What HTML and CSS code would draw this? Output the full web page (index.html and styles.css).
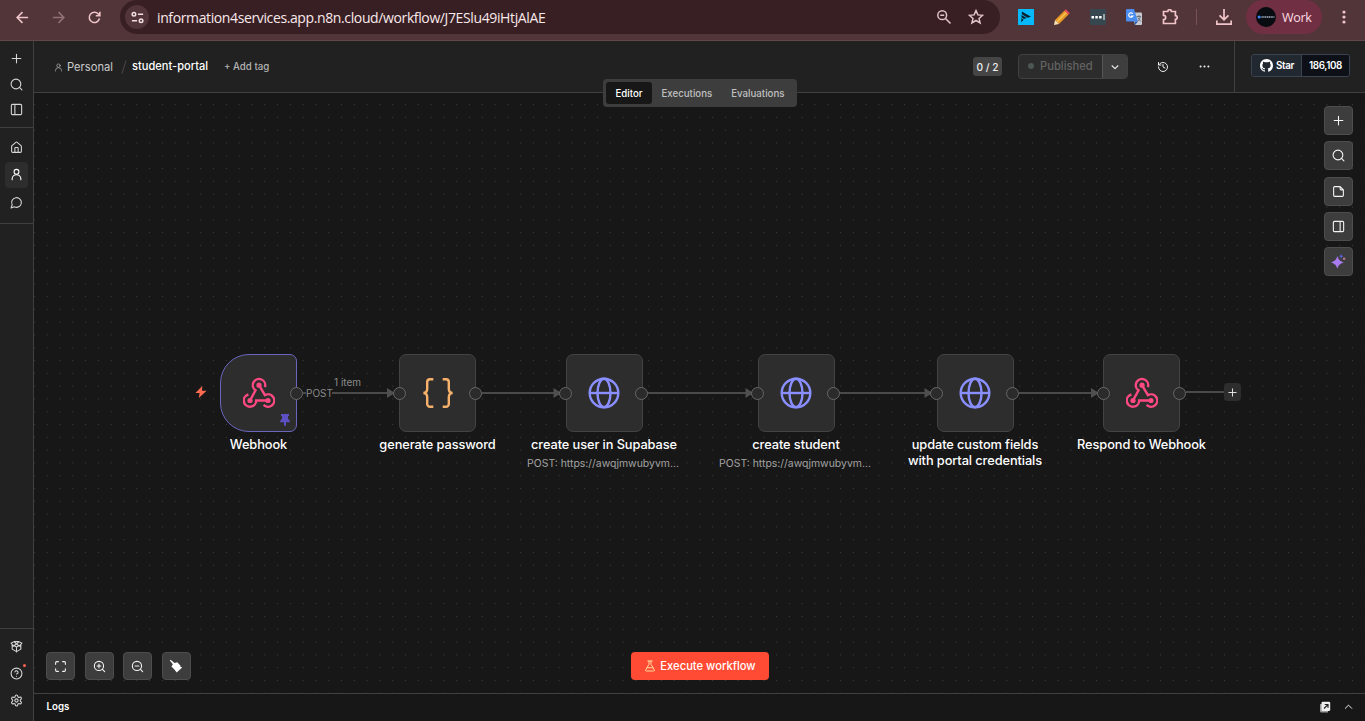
FILE: index.html
```html
<!DOCTYPE html>
<html lang="en">
<head>
<meta charset="utf-8">
<title>student-portal - n8n</title>
<link rel="stylesheet" href="styles.css">
</head>
<body>
<svg class="defs" aria-hidden="true">
  <symbol id="plus" viewBox="0 0 24 24"><path d="M4 12h16M12 4v16"/></symbol>
  <symbol id="search" viewBox="0 0 24 24"><circle cx="11" cy="11" r="9"/><path d="m22 22-4.500-4.500"/></symbol>
  <symbol id="panel-left" viewBox="0 0 24 24"><rect x="2.500" y="2.500" width="19" height="19" rx="2"/><path d="M9 3v18"/></symbol>
  <symbol id="panel-right" viewBox="0 0 24 24"><rect x="2.500" y="2.500" width="19" height="19" rx="2"/><path d="M15 3v18"/></symbol>
  <symbol id="home" viewBox="0 0 24 24"><path d="M15 21v-8a1 1 0 0 0-1-1h-4a1 1 0 0 0-1 1v8"/><path d="M3 10a2 2 0 0 1 .7-1.500l7-6a2 2 0 0 1 2.600 0l7 6A2 2 0 0 1 21 10v9a2 2 0 0 1-2 2H5a2 2 0 0 1-2-2z"/></symbol>
  <symbol id="user" viewBox="0 0 24 24"><circle cx="12" cy="7" r="4.500"/><path d="M4 21.500v-1.500a8 7.500 0 0 1 16 0v1.500"/></symbol>
  <symbol id="chat" viewBox="0 0 24 24"><path d="M7.900 20A9 9 0 1 0 4 16.100L2 22Z"/></symbol>
  <symbol id="box" viewBox="0 0 24 24"><path d="M12 22v-9M12 13l-8-4.500M12 13l8-4.500M4 8.500v8.300l8 4.700 8-4.700V8.500M12 7.500l4.500-4.500 5.500 3-4 4.200M12 7.500L7.500 3 2 6l4 4.200M7.500 3h9M12 7.500l-6 4M12 7.500l6 4"/></symbol>
  <symbol id="help" viewBox="0 0 24 24"><circle cx="12" cy="12" r="10"/><path d="M9.100 9a3 3 0 0 1 5.800 1c0 2-3 3-3 3M12 17h.01"/></symbol>
  <symbol id="gear" viewBox="0 0 24 24"><path d="M9.700 4.100a2.300 2.300 0 0 1 4.600 0 2.300 2.300 0 0 0 3.300 1.900 2.300 2.300 0 0 1 2.300 4 2.300 2.300 0 0 0 0 3.900 2.300 2.300 0 0 1-2.300 4 2.300 2.300 0 0 0-3.300 1.900 2.300 2.300 0 0 1-4.600 0 2.300 2.300 0 0 0-3.300-1.900 2.300 2.300 0 0 1-2.300-4 2.300 2.300 0 0 0 0-3.900 2.300 2.300 0 0 1 2.300-4 2.300 2.300 0 0 0 3.300-1.900"/><circle cx="12" cy="12" r="3"/></symbol>
  <symbol id="chev-down" viewBox="0 0 24 24"><path d="m5 9 7 7 7-7"/></symbol>
  <symbol id="chev-up" viewBox="0 0 24 24"><path d="m5 16 7-7 7 7"/></symbol>
  <symbol id="history" viewBox="0 0 24 24"><path d="M3 12a9 9 0 1 0 9-9 9.800 9.800 0 0 0-6.700 2.700L3 8M3 3v5h5M12 7v5l4 2"/></symbol>
  <symbol id="dots" viewBox="0 0 24 24"><path d="M3.500 12h.01M12 12h.01M20.500 12h.01"/></symbol>
  <symbol id="note" viewBox="0 0 24 24"><path d="M15 3H5a2 2 0 0 0-2 2v14a2 2 0 0 0 2 2h14a2 2 0 0 0 2-2V9ZM15 3v4a2 2 0 0 0 2 2h4"/></symbol>
  <symbol id="fit" viewBox="0 0 24 24"><path d="M8 3H5a2 2 0 0 0-2 2v3M21 8V5a2 2 0 0 0-2-2h-3M3 16v3a2 2 0 0 0 2 2h3M16 21h3a2 2 0 0 0 2-2v-3"/></symbol>
  <symbol id="zoom-in" viewBox="0 0 24 24"><circle cx="11" cy="11" r="8.500"/><path d="m21.500 21.500-4.500-4.500M11 7.500v7M7.500 11h7"/></symbol>
  <symbol id="zoom-out" viewBox="0 0 24 24"><circle cx="11" cy="11" r="8.500"/><path d="m21.500 21.500-4.500-4.500M7.500 11h7"/></symbol>
  <symbol id="flask" viewBox="0 0 24 24"><path d="M14 2v6.500l6.500 11A1.700 1.700 0 0 1 19 22H5a1.700 1.700 0 0 1-1.500-2.500L10 8.500V2M7.500 2h9M6.500 15.500h11"/></symbol>
  <symbol id="globe" viewBox="0 0 32 32"><circle cx="16" cy="16" r="14.300"/><ellipse cx="16" cy="16" rx="6.500" ry="14.300"/><path d="M1.700 16h28.600"/></symbol>
  <symbol id="webhook" viewBox="0 0 32 32"><path d="M7 23.500 12.500 13.300A6.200 6.200 0 1 1 21.900 10.100M25 23.500H13.200A6.200 6.200 0 1 1 5.400 17.500M16 8.200 21.900 18.200A6.200 6.200 0 1 1 20.600 27.900"/><g fill="currentColor" stroke="none"><circle cx="16" cy="8.200" r="2.600"/><circle cx="7" cy="23.500" r="2.600"/><circle cx="25" cy="23.500" r="2.600"/></g></symbol>
</svg>

<div class="browser">
  <div class="slot"><svg class="nav-icon" viewBox="0 0 16 16"><path d="M14 8H2.500M8 2.300 2.300 8 8 13.700"/></svg></div>
  <div class="slot dim"><svg class="nav-icon" viewBox="0 0 16 16"><path d="M2 8h11.500M8 2.300 13.700 8 8 13.700"/></svg></div>
  <div class="slot"><svg class="nav-icon" viewBox="0 0 16 16"><path d="M13.300 9A5.500 5.500 0 1 1 12 4.200L13.500 5.700M13.700 1.800v4.300H9.400"/></svg></div>
  <div class="address">
    <span class="site"><svg viewBox="0 0 16 16"><circle cx="4.200" cy="4.500" r="1.900"/><path d="M8.500 4.500h5.500M2 11.500h5.500"/><circle cx="11.800" cy="11.500" r="1.900"/></svg></span>
    <span class="url">information4services.app.n8n.cloud/workflow/J7ESlu49iHtjAlAE</span>
    <svg class="addr-icon" viewBox="0 0 16 16"><circle cx="6.200" cy="6.200" r="4.400"/><path d="m9.500 9.500 5 5M4.200 6.200h4"/></svg>
    <svg class="addr-icon star" viewBox="0 0 16 16"><path d="m8 1.600 1.900 4.300 4.700.4-3.600 3.100 1.100 4.600L8 11.500 3.900 14 5 9.400 1.400 6.300l4.700-.4z"/></svg>
  </div>
  <div class="ext">
    <div class="slot"><svg class="ext-icon" viewBox="0 0 16 16"><path fill="#05b9fa" d="M0 0h16v16H0z"/><path fill="#09222d" d="M3.800 2.500 13 7.800 9.500 8.700 3.800 5.200zM3.500 6l5 3-2.500.9-2.500-1.500zM3.300 9.200l2.400 1.500-2.400 2.500z"/></svg></div>
    <div class="slot"><svg class="ext-icon" viewBox="0 0 16 16"><path fill="#e79622" d="m1 11 9.500-9.500 4 4L5 15z"/><path fill="#f5bd4f" d="m2.300 12.300 9.500-9.500 1.200 1.200-9.500 9.500z"/><path fill="#f44765" d="m10.500 1.500 1.300-1.200 3.900 3.900-1.200 1.300z"/><path fill="#f8dfb6" d="m1 11-1 5 5-1z"/></svg></div>
    <div class="slot"><svg class="ext-icon" viewBox="0 0 16 16"><path fill="#37474f" d="M0 0h16v16H0z"/><path fill="#fff" d="M1.500 7h2.500v2.500H1.500zM5.300 7h2.500v2.500H5.300zM9.100 7h2.500v2.500H9.100zM13.500 5h1v6h-1z"/></svg></div>
    <div class="slot"><svg class="ext-icon" viewBox="0 0 16 16"><path fill="#c9cbd0" d="M6 3.500h9a1 1 0 0 1 1 1V15a1 1 0 0 1-1 1H9z"/><path fill="#4a8cf0" d="M1 0h7l4 12.500H1a1 1 0 0 1-1-1V1a1 1 0 0 1 1-1z"/><path fill="#2861b5" d="M8.800 12.500H12L9 16z"/><path fill="none" stroke="#fff" stroke-width="1.200" d="M6.800 4.800a2.200 2.200 0 1 0 .1 2.200H5"/><path fill="none" stroke="#68727d" d="M10.500 7.500H15M13 6v1.500M14.300 7.500c-.5 2.500-1.600 4-3 5M11.800 8.500l3 4"/></svg></div>
    <div class="slot"><svg class="ext-icon line" viewBox="0 0 16 16"><path d="M1.500 2.500h4.300a1.800 1.800 0 0 1 3.600 0h4v4.200a1.800 1.800 0 0 1 0 3.600v4.200H1.500v-3.800a2.200 2.200 0 0 0 0-4.400z"/></svg></div>
    <span class="ext-sep"></span>
    <div class="slot"><svg class="ext-icon line" viewBox="0 0 16 16"><path d="M8 0v10.500M3.500 6.300 8 10.700l4.500-4.400M.8 11.500v3.700h14.400v-3.700"/></svg></div>
    <div class="profile"><svg class="avatar" viewBox="0 0 20 20"><circle cx="10" cy="10" r="10" fill="#080b10"/><circle cx="3.200" cy="10" r="1.600" fill="#3e83f0"/><path stroke="#a8b4c4" stroke-width="1.300" stroke-dasharray="1.300 .5" d="M5.500 10h13"/></svg><span>Work</span></div>
    <div class="slot"><svg class="ext-icon kebab" viewBox="0 0 16 16"><circle cx="8" cy="3" r="1.600"/><circle cx="8" cy="8" r="1.600"/><circle cx="8" cy="13" r="1.600"/></svg></div>
  </div>
</div>

<div class="app">
  <nav class="sidebar">
    <div class="side-group top"><svg class="ic"><use href="#plus"/></svg><svg class="ic"><use href="#search"/></svg><svg class="ic"><use href="#panel-left"/></svg></div>
    <div class="side-group mid"><span class="side-item"><svg class="ic"><use href="#home"/></svg></span><span class="side-item active"><svg class="ic"><use href="#user"/></svg></span><span class="side-item"><svg class="ic"><use href="#chat"/></svg></span></div>
    <div class="side-group low"><svg class="ic"><use href="#box"/></svg><span class="help"><svg class="ic"><use href="#help"/></svg><i class="badge"></i></span><svg class="ic"><use href="#gear"/></svg></div>
  </nav>

  <main class="main">
    <header class="header">
      <svg class="ic crumb-icon"><use href="#user"/></svg>
      <span class="crumb">Personal</span>
      <svg class="slash" viewBox="0 0 6 14"><path d="M5 .5 1 13.500"/></svg>
      <span class="title">student-portal</span>
      <span class="tag">+ Add tag</span>
      <span class="count">0 / 2</span>
      <div class="publish"><span class="pub-label"><i></i>Published</span><span class="pub-menu"><svg class="ic"><use href="#chev-down"/></svg></span></div>
      <svg class="ic hist"><use href="#history"/></svg>
      <svg class="ic more"><use href="#dots"/></svg>
      <div class="github">
        <div class="gh">
          <span class="gh-star"><svg viewBox="0 0 16 16"><path d="M8 0c4.420 0 8 3.580 8 8a8.010 8.010 0 0 1-5.450 7.590c-.4.080-.55-.17-.55-.38 0-.27.010-1.130.010-2.200 0-.75-.25-1.230-.54-1.480 1.780-.2 3.650-.88 3.650-3.950 0-.88-.31-1.590-.82-2.150.080-.2.360-1.020-.080-2.120 0 0-.67-.22-2.200.82-.64-.18-1.320-.27-2-.27s-1.360.090-2 .27c-1.530-1.030-2.200-.82-2.200-.82-.44 1.100-.16 1.920-.080 2.120-.51.560-.82 1.280-.82 2.150 0 3.060 1.860 3.750 3.640 3.950-.23.200-.44.550-.51 1.070-.46.210-1.610.55-2.330-.66-.15-.24-.6-.83-1.230-.82-.67.010-.27.380.010.530.34.190.73.900.82 1.130.16.450.68 1.310 2.690.94 0 .67.010 1.300.010 1.490 0 .21-.15.450-.55.380A7.995 7.995 0 0 1 0 8c0-4.420 3.580-8 8-8"/></svg>Star</span>
          <span class="gh-num">186,108</span>
        </div>
      </div>
      <div class="tabs"><span class="tab on">Editor</span><span class="tab">Executions</span><span class="tab">Evaluations</span></div>
    </header>

    <section class="canvas">
      <svg class="edges" viewBox="0 0 1331 600">
        <g class="wires"><path d="M269 300h3M298 300h56M448 300h74M614 300h102M806 300h91M985 300h77M1152 299h38"/></g>
        <g class="arrows"><path d="m353 295 8 5-8 5zM519.500 295l8 5-8 5zM711.500 295l8 5-8 5zM890.500 295l8 5-8 5zM1057 295l8 5-8 5z"/></g>
      </svg>
      <svg class="bolt" viewBox="0 0 12 12"><path d="M7.300 0 .4 6.900h4.200L3.800 12l7.800-7.200H7z"/></svg>
      <span class="edge-label method">POST</span>
      <span class="edge-label items">1 item</span>

      <div class="node n1"><div class="card trigger"><svg class="art pink"><use href="#webhook"/></svg><i class="port out"></i>
        <svg class="pin" viewBox="0 0 10 12"><path d="M1 0h8v2H8v2.600L9.800 7v1.300H6v3.200L5 12l-1-.5V8.300H.2V7L2 4.600V2H1z"/></svg></div><div class="name">Webhook</div></div>
      <div class="node n2"><div class="card"><svg class="art orange" viewBox="0 0 32 32"><path d="M11.300 2.200H8a2.800 2.800 0 0 0-2.800 2.800v6.700c0 2.400-1.500 4.200-3.800 4.300 2.300.1 3.800 1.900 3.800 4.300V27A2.800 2.800 0 0 0 8 29.800h3.300M20.700 2.200H24a2.800 2.800 0 0 1 2.800 2.800v6.700c0 2.400 1.500 4.200 3.800 4.300-2.300.1-3.800 1.900-3.800 4.300V27a2.800 2.800 0 0 1-2.800 2.800h-3.300"/></svg><i class="port in"></i><i class="port out"></i></div><div class="name">generate password</div></div>
      <div class="node n3"><div class="card"><svg class="art blue"><use href="#globe"/></svg><i class="port in"></i><i class="port out"></i></div><div class="name">create user in Supabase</div><div class="sub">POST: https://awqjmwubyvm...</div></div>
      <div class="node n4"><div class="card"><svg class="art blue"><use href="#globe"/></svg><i class="port in"></i><i class="port out"></i></div><div class="name">create student</div><div class="sub">POST: https://awqjmwubyvm...</div></div>
      <div class="node n5"><div class="card"><svg class="art blue"><use href="#globe"/></svg><i class="port in"></i><i class="port out"></i></div><div class="name">update custom fields<br>with portal credentials</div></div>
      <div class="node n6"><div class="card"><svg class="art pink"><use href="#webhook"/></svg><i class="port in"></i><i class="port out"></i></div><div class="name">Respond to Webhook</div></div>
      <span class="add-node"><svg class="ic"><use href="#plus"/></svg></span>

      <div class="tools">
        <span class="btn"><svg class="ic"><use href="#plus"/></svg></span>
        <span class="btn"><svg class="ic"><use href="#search"/></svg></span>
        <span class="btn"><svg class="ic"><use href="#note"/></svg></span>
        <span class="btn"><svg class="ic"><use href="#panel-right"/></svg></span>
        <span class="btn"><svg class="sparkle" viewBox="0 0 16 16"><path fill="#a87cf0" d="M6.800 2.200C8 6.100 9.300 7.500 13.500 9c-4.200 1.500-5.500 2.900-6.700 6.800C5.600 11.900 4.300 10.500.2 9c4.100-1.500 5.400-2.900 6.600-6.800z"/><path fill="#5b60d6" d="M10.800 0c.5 1.500 1 2 2.500 2.500-1.500.5-2 1-2.500 2.500-.5-1.500-1-2-2.500-2.500C9.800 2 10.300 1.500 10.800 0z"/><circle cx="14" cy="5" r="1.300" fill="#b67b8b"/></svg></span>
      </div>
      <div class="controls">
        <span class="btn"><svg class="ic"><use href="#fit"/></svg></span>
        <span class="btn"><svg class="ic"><use href="#zoom-in"/></svg></span>
        <span class="btn"><svg class="ic"><use href="#zoom-out"/></svg></span>
        <span class="btn"><svg class="broom" viewBox="0 0 14 14"><path d="M1.600.8 5.500 4 8.300 3.200l3 3.200.2 1.400 1.700.7-5.500 4.900-2.500-3.100L2.400 7.600l1.500-2.400L.8 1.600z"/></svg></span>
      </div>
      <div class="execute"><svg class="ic"><use href="#flask"/></svg>Execute workflow</div>
    </section>

    <footer class="logs"><span>Logs</span>
      <svg class="popout" viewBox="0 0 12 12"><path fill="#9b9b9b" d="M1 3h8v8.500H2.500A1.500 1.500 0 0 1 1 10z"/><rect x="2.500" y=".8" width="8.700" height="9.200" rx="1.300" fill="#f0f0f0"/><path d="M5 7.500 8.700 3.800M5.700 3.500H9v3.300" stroke="#222" stroke-width="1.200" fill="none"/></svg>
      <svg class="ic"><use href="#chev-up"/></svg>
    </footer>
  </main>
</div>
</body>
</html>
```
FILE: styles.css
```css
* { box-sizing: border-box; }
body { margin: 0; width: 1365px; height: 721px; overflow: hidden; display: flex; flex-direction: column; background: #171717; color: #eee; font-family: Inter, "Liberation Sans", sans-serif; }
svg { display: block; flex: none; }
.defs { position: absolute; width: 0; height: 0; }
.ic { width: 13px; height: 13px; fill: none; stroke: currentColor; stroke-width: 2; stroke-linecap: round; stroke-linejoin: round; }

/* Browser toolbar */
.browser { flex: none; display: flex; height: 41px; padding: 0 3px 6px 4px; background: #513539; border-bottom: 1px solid #604649; font-family: "Open Sans", sans-serif; color: #f0c4c9; }
.slot { width: 36px; height: 34px; display: flex; align-items: center; justify-content: center; }
.dim { color: #927074; }
.nav-icon { width: 15px; height: 15px; fill: none; stroke: currentColor; stroke-width: 1.700; }
.address { display: flex; align-items: center; width: 880px; height: 34px; margin-left: 8px; padding: 0 16px 0 5px; border-radius: 17px; background: #381f24; color: #e0c4c7; }
.site { width: 24px; height: 24px; border-radius: 50%; background: #51353a; display: flex; align-items: center; justify-content: center; }
.site svg { width: 15px; height: 15px; fill: none; stroke: #f2dfe0; stroke-width: 1.600; }
.url { flex: 1; margin-left: 8px; font-size: 14px; letter-spacing: -.38px; color: #f8e9ea; white-space: nowrap; }
.addr-icon { width: 16px; height: 16px; fill: none; stroke: currentColor; stroke-width: 1.500; }
.star { margin-left: 16px; }
.ext { display: flex; align-items: center; margin-left: 8px; height: 34px; }
.ext-icon { width: 16px; height: 16px; }
.ext-icon.line { fill: none; stroke: currentColor; stroke-width: 1.700; }
.kebab { fill: currentColor; }
.ext-sep { width: 1px; height: 16px; margin: 0 9px 0 8px; background: #785257; }
.profile { display: flex; align-items: center; gap: 6px; width: 76px; height: 34px; margin: 0 4px; padding-left: 10px; border-radius: 17px; background: #712f43; color: #fadde3; font-size: 12.600px; letter-spacing: -.4px; }
.avatar { width: 20px; height: 20px; }

/* Sidebar */
.app { flex: 1; display: flex; min-height: 0; }
.sidebar { flex: none; display: flex; flex-direction: column; width: 34px; background: #212121; border-right: 1px solid #404040; color: #d6d6d6; }
.side-group { display: flex; flex-direction: column; align-items: center; padding-right: 1px; }
.top { height: 87px; padding-top: 11px; gap: 12.500px; border-bottom: 1px solid #404040; }
.mid { height: 96px; padding-top: 6px; gap: 1.500px; border-bottom: 1px solid #404040; }
.side-item { width: 23px; height: 26px; border-radius: 4px; display: flex; align-items: center; justify-content: center; }
.side-item.active { background: #2d2d2d; color: #fff; }
.low { margin-top: auto; height: 93px; padding-top: 11px; gap: 14px; border-top: 1px solid #404040; }
.help { position: relative; }
.badge { position: absolute; top: -3px; right: -3px; width: 3px; height: 3px; border-radius: 50%; background: #ff6251; }

/* Header */
.main { flex: 1; display: flex; flex-direction: column; min-width: 0; }
.header { position: relative; flex: none; display: flex; align-items: center; height: 52px; background: #212121; border-bottom: 1px solid #404040; white-space: nowrap; }
.crumb-icon { width: 9px; height: 9px; margin: 2px 0 0 20px; color: #aaa; }
.crumb { width: 55px; margin-left: 4px; font-size: 11.200px; color: #c9c9c9; }
.slash { width: 6px; height: 14px; margin-left: -1px; fill: none; stroke: #504848; }
.title { width: 76px; margin: -1px 0 0 5px; font-size: 11.100px; font-weight: 500; color: #fff; }
.tag { margin-left: 16px; font-size: 9.700px; font-weight: 500; color: #b3b3b3; }
.count { display: flex; align-items: center; justify-content: center; width: 29px; height: 19px; margin-left: auto; border-radius: 3px; background: #454545; font-size: 10.200px; font-weight: 500; }
.publish { display: flex; width: 110px; height: 25px; margin-left: 16px; border: 1px solid #414141; border-radius: 4px; overflow: hidden; background: #2c2c2c; }
.pub-label { flex: 1; display: flex; align-items: center; gap: 6px; padding: 0 0 1px 9px; font-size: 11.200px; font-weight: 500; color: #636363; }
.pub-label i { width: 6px; height: 6px; border-radius: 50%; background: #4c5652; }
.pub-menu { width: 25px; display: flex; align-items: center; justify-content: center; background: #3e3e3e; border-left: 1px solid #565656; }
.pub-menu .ic { width: 10px; height: 10px; stroke-width: 2.600; }
.hist { width: 12px; height: 12px; margin-left: 29px; }
.more { width: 11px; height: 11px; margin-left: 30px; stroke-width: 4.500; }
.github { display: flex; align-items: center; width: 131px; height: 51px; margin-left: 24px; padding: 0 0 2px 16px; border-left: 1px solid #404040; }
.gh { display: flex; width: 99px; height: 23px; border: 1px solid #3b4350; border-radius: 3px; font-size: 9.800px; font-weight: 600; letter-spacing: -.35px; overflow: hidden; color: #fff; }
.gh-star { display: flex; align-items: center; gap: 3px; width: 49px; padding-left: 8px; background: #212830; }
.gh-star svg { width: 13px; height: 13px; fill: #fff; }
.gh-num { flex: 1; display: flex; align-items: center; justify-content: center; border-left: 1px solid #3b4350; background: #0d1117; }
.tabs { position: absolute; z-index: 2; left: 569px; top: 38px; display: flex; width: 194px; height: 28px; padding: 3px; border-radius: 4px; background: #3d3d3d; }
.tab { display: flex; align-items: center; padding: 0 9.500px; font-size: 9.700px; font-weight: 500; color: #c0c0c0; }
.tab.on { width: 46px; padding: 0; justify-content: center; border-radius: 3px; background: #171717; color: #fff; }

/* Canvas */
.canvas { position: relative; flex: 1; overflow: hidden; background-color: #171717; background-image: radial-gradient(circle at 6.400px 6.400px, #3d3d3d .6px, transparent 1px); background-size: 12.800px 12.800px; background-position: -6px 5.200px; }
.edges { position: absolute; left: 0; top: 0; width: 1331px; height: 600px; }
.wires { fill: none; stroke: #4a4a4a; stroke-width: 1.800; }
.arrows { fill: #4f4f4f; }
.bolt { position: absolute; left: 161px; top: 293px; width: 12px; height: 12px; fill: #ff6a50; }
.edge-label { position: absolute; font-size: 10px; line-height: 12px; color: #8b8b8b; white-space: nowrap; }
.method { left: 272px; top: 294px; }
.items { left: 300px; top: 283px; }
.node { position: absolute; top: 261px; width: 170px; display: flex; flex-direction: column; align-items: center; text-align: center; }
.n1 { left: 139.500px; } .n2 { left: 318.500px; } .n3 { left: 485px; } .n4 { left: 677px; } .n5 { left: 856px; } .n6 { left: 1022.500px; }
.card { position: relative; width: 77px; height: 78px; display: flex; align-items: center; justify-content: center; border: 1px solid #434343; border-radius: 7px; background: #2d2d2d; }
.trigger { border-color: #6a66c0; border-radius: 29px 7px 7px 29px; }
.art { width: 32px; height: 32px; fill: none; stroke: currentColor; stroke-width: 2.400; }
.pink { color: #ff4982; } .orange { color: #f6b26b; } .blue { color: #8a8fff; }
.port { position: absolute; top: 32px; width: 13px; height: 13px; border: 1px solid #686868; border-radius: 50%; background: #2b2b2b; }
.port.in { left: -7.500px; } .port.out { right: -6.500px; }
.pin { position: absolute; right: 6px; bottom: 5px; width: 10px; height: 12px; fill: #5d4fc4; }
.name { margin-top: 5px; font-size: 12.800px; line-height: 16px; font-weight: 550; letter-spacing: -.09px; color: #fff; white-space: nowrap; }
.sub { margin-top: 4px; padding-right: 2px; font-size: 10.450px; line-height: 13px; color: #a2a2a2; white-space: nowrap; }
.add-node { position: absolute; left: 1190px; top: 290px; width: 17px; height: 18px; display: flex; align-items: center; justify-content: center; border-radius: 4px; background: #2d2d2d; }
.add-node .ic { width: 11px; height: 11px; }
.btn { width: 29px; height: 29px; display: flex; align-items: center; justify-content: center; border: 1px solid #4d4d4d; border-radius: 4px; background: #3d3d3d; color: #f4f4f4; }
.tools { position: absolute; left: 1290px; top: 13px; display: flex; flex-direction: column; gap: 6.300px; }
.sparkle { width: 15px; height: 15px; }
.controls { position: absolute; left: 12px; top: 559px; display: flex; gap: 9.600px; }
.controls .btn { height: 28px; }
.broom { width: 14px; height: 14px; fill: #fff; }
.execute { position: absolute; left: 597px; top: 559px; width: 138px; height: 28px; display: flex; align-items: center; justify-content: center; gap: 4px; padding-bottom: 1px; border-radius: 4px; background: #ff4b33; color: #fff; font-size: 11.200px; font-weight: 550; white-space: nowrap; }
.execute .ic { stroke: #ffdc9e; width: 12px; height: 12px; }

/* Logs */
.logs { flex: none; display: flex; align-items: center; height: 28px; padding: 0 11px 2px 12.500px; border-top: 1px solid #404040; background: #171717; font-size: 9.700px; font-weight: 600; color: #fff; }
.popout { width: 12px; height: 12px; margin-left: auto; }
.logs .ic { width: 11px; height: 11px; margin-left: 12px; }
```
